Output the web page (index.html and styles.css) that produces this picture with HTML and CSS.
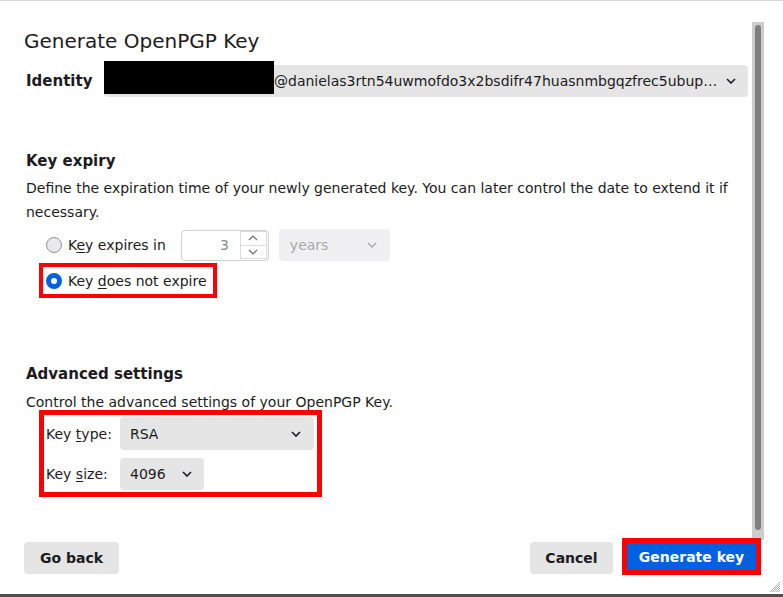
FILE: index.html
```html
<!DOCTYPE html>
<html lang="en">
<head>
<meta charset="utf-8">
<title>Generate OpenPGP Key</title>
<link rel="stylesheet" href="styles.css">
</head>
<body>
<div class="window">
  <div class="main">
    <div class="content">
      <h1 class="title">Generate OpenPGP Key</h1>
      <div class="identity-row">
        <span class="identity-label">Identity</span>
        <div class="select identity-select">
          <span class="select-text identity-text">@danielas3rtn54uwmofdo3x2bsdifr47huasnmbgqzfrec5ubup…</span>
          <svg class="chev" width="10" height="6" viewBox="0 0 10 6"><path d="M1 1l4 4 4-4" /></svg>
        </div>
        <span class="redact"></span>
      </div>

      <h2 class="section-title expiry-title">Key expiry</h2>
      <p class="desc expiry-desc">Define the expiration time of your newly generated key. You can later control the date to extend it if necessary.</p>

      <div class="radio-group">
        <div class="radio-row first-row">
          <span class="radio"></span>
          <span class="radio-label">K<u>e</u>y expires in</span>
          <div class="number-input">
            <span class="num">3</span>
            <span class="spinner">
              <span class="spin spin-up"><svg width="10" height="6" viewBox="0 0 10 6"><path d="M1 5l4-4 4 4" /></svg></span>
              <span class="spin spin-down"><svg width="10" height="6" viewBox="0 0 10 6"><path d="M1 1l4 4 4-4" /></svg></span>
            </span>
          </div>
          <div class="select years-select">
            <span class="select-text">years</span>
            <svg class="chev" width="10" height="6" viewBox="0 0 10 6"><path d="M1 1l4 4 4-4" /></svg>
          </div>
        </div>
        <div class="radio-row highlight-row">
          <span class="radio checked"></span>
          <span class="radio-label">Key <u>d</u>oes not expire</span>
        </div>
      </div>

      <h2 class="section-title adv-title">Advanced settings</h2>
      <p class="desc adv-desc">Control the advanced settings of your OpenPGP Key.</p>

      <div class="adv-box">
        <span class="field-label">Key <u>t</u>ype:</span>
        <div class="select type-select">
          <span class="select-text">RSA</span>
          <svg class="chev" width="10" height="6" viewBox="0 0 10 6"><path d="M1 1l4 4 4-4" /></svg>
        </div>
        <span class="field-label">Key <u>s</u>ize:</span>
        <div class="select size-select">
          <span class="select-text">4096</span>
          <svg class="chev" width="10" height="6" viewBox="0 0 10 6"><path d="M1 1l4 4 4-4" /></svg>
        </div>
      </div>
    </div>
    <div class="scrollbar"><div class="thumb"></div></div>
  </div>

  <div class="footer">
    <button class="btn back-btn">Go back</button>
    <span class="spacer"></span>
    <button class="btn cancel-btn">Cancel</button>
    <span class="primary-wrap"><button class="btn primary-btn">Generate key</button></span>
  </div>

  <svg class="grip" width="12" height="12" viewBox="0 0 12 12">
    <path d="M11 1L1 11M11 3L3 11M11 5L5 11M11 7L7 11M11 9L9 11" />
  </svg>
</div>
</body>
</html>
```

FILE: styles.css
```css
* { box-sizing: border-box; }

html, body {
  margin: 0;
  padding: 0;
  background: #ffffff;
}

body {
  font-family: "DejaVu Sans", "Liberation Sans", sans-serif;
  font-size: 14px;
  color: #1c1b22;
}

.window {
  position: relative;
  width: 783px;
  height: 597px;
  border-top: 1px solid #d6d6d6;
  border-bottom: 3px solid #505050;
  display: flex;
  flex-direction: column;
  overflow: hidden;
}

.main {
  height: 537px;
  display: flex;
  flex-shrink: 0;
}

.content {
  width: 748px;
  padding-left: 26px;
  padding-top: 27px;
}

.title {
  margin: 0 0 0 -2px;
  font-size: 20px;
  line-height: 26px;
  font-weight: normal;
}

.identity-row {
  position: relative;
  display: flex;
  align-items: center;
  height: 32px;
  margin-top: 11px;
}

.identity-label {
  width: 78px;
  font-size: 15px;
  font-weight: bold;
}

.select {
  display: flex;
  align-items: center;
  height: 32px;
  background: #e5e5e5;
  border-radius: 4px;
}

.select-text {
  white-space: nowrap;
  overflow: hidden;
}

.chev {
  flex-shrink: 0;
}

.chev path, .spin path {
  fill: none;
  stroke: #1c1b22;
  stroke-width: 1.6;
}

.identity-select {
  flex: 1;
  padding-left: 170px;
  padding-right: 12px;
  justify-content: space-between;
}

.identity-text {
  flex: 1;
}

.redact {
  position: absolute;
  left: 78px;
  top: -4px;
  width: 170px;
  height: 33px;
  background: #000000;
}

.section-title {
  margin: 0;
  font-size: 15px;
  line-height: 20px;
  font-weight: bold;
}

.expiry-title { margin-top: 54px; }

.desc {
  margin: 0;
  line-height: 24px;
  padding-right: 6px;
}

.expiry-desc { margin-top: 5px; }

.radio-group {
  margin-top: 5px;
  display: flex;
  flex-direction: column;
}

.radio-row {
  display: flex;
  align-items: center;
}

.first-row {
  height: 32px;
  padding-left: 20px;
}

.highlight-row {
  width: fit-content;
  margin-top: 2px;
  margin-left: 13px;
  height: 35px;
  border: 4px solid #ff0000;
  padding-left: 3px;
  padding-right: 6px;
}

.radio {
  width: 16px;
  height: 16px;
  border-radius: 50%;
  border: 1px solid #8f8f9d;
  background: #e9e9ed;
  margin-right: 6px;
  flex-shrink: 0;
}

.radio.checked {
  border: 5px solid #0060df;
  background: #ffffff;
}

.radio-label u, .field-label u {
  text-decoration-thickness: 1px;
  text-underline-offset: 2px;
}

.number-input {
  margin-left: 15px;
  width: 88px;
  height: 31px;
  border: 1px solid #cfcfd8;
  border-radius: 4px;
  background: #ffffff;
  display: flex;
  align-items: center;
  justify-content: flex-end;
  padding-right: 1px;
}

.num {
  color: #8a8a8a;
  margin-right: 11px;
}

.spinner {
  width: 27px;
  height: 28px;
  border: 1px solid #dcdcdc;
  display: flex;
  flex-direction: column;
}

.spin {
  flex: 1;
  display: flex;
  align-items: center;
  justify-content: center;
}

.spin-up { border-bottom: 1px solid #dcdcdc; }

.spin path { stroke: #6a6a6a; stroke-width: 1.2; }

.years-select {
  margin-left: 10px;
  width: 111px;
  background: #f0f0f2;
  color: #a8a8a8;
  padding-left: 11px;
  padding-right: 13px;
  justify-content: space-between;
}

.years-select .chev path { stroke: #a8a8a8; stroke-width: 1.3; }

.adv-title { margin-top: 66px; }

.adv-desc { margin-top: 6px; }

.adv-box {
  margin-top: -4px;
  margin-left: 13px;
  width: fit-content;
  border: 5px solid #ff0000;
  padding: 2px 3px 2px 2px;
  display: grid;
  grid-template-columns: 74px 194px;
  grid-template-rows: 33px 32px;
  row-gap: 8px;
  align-items: center;
}

.type-select {
  height: 33px;
  padding-left: 10px;
  padding-right: 13px;
  justify-content: space-between;
}

.size-select {
  width: 84px;
  padding-left: 10px;
  padding-right: 12px;
  justify-content: space-between;
}

.scrollbar {
  margin-left: 4px;
  margin-top: 21px;
  width: 12px;
  height: 518px;
  background: #cdcdcd;
  padding-top: 3px;
}

.thumb {
  width: 6px;
  height: 505px;
  margin: 0 auto;
  border-radius: 3px;
  background: #7f7f7f;
}

.footer {
  flex: 1;
  display: flex;
  align-items: flex-start;
  padding: 0 22px 0 24px;
}

.btn {
  font-family: "DejaVu Sans", "Liberation Sans", sans-serif;
  font-size: 14px;
  font-weight: bold;
  color: #1c1b22;
  border: none;
  border-radius: 4px;
  background: #e5e5e5;
  height: 32px;
  margin: 4px 0 0 0;
  padding: 0;
}

.back-btn { width: 95px; }

.cancel-btn { width: 83px; }

.spacer { flex: 1; }

.primary-wrap {
  margin-left: 9px;
  border: 5px solid #ff0000;
  display: flex;
}

.primary-btn {
  margin: 0;
  height: 27px;
  width: 129px;
  border-radius: 0;
  background: #0061e0;
  color: #ffffff;
}

.grip {
  position: absolute;
  right: 2px;
  bottom: 1px;
}

.grip path {
  stroke: #9a9a9a;
  stroke-width: 0.8;
  fill: none;
}
```
